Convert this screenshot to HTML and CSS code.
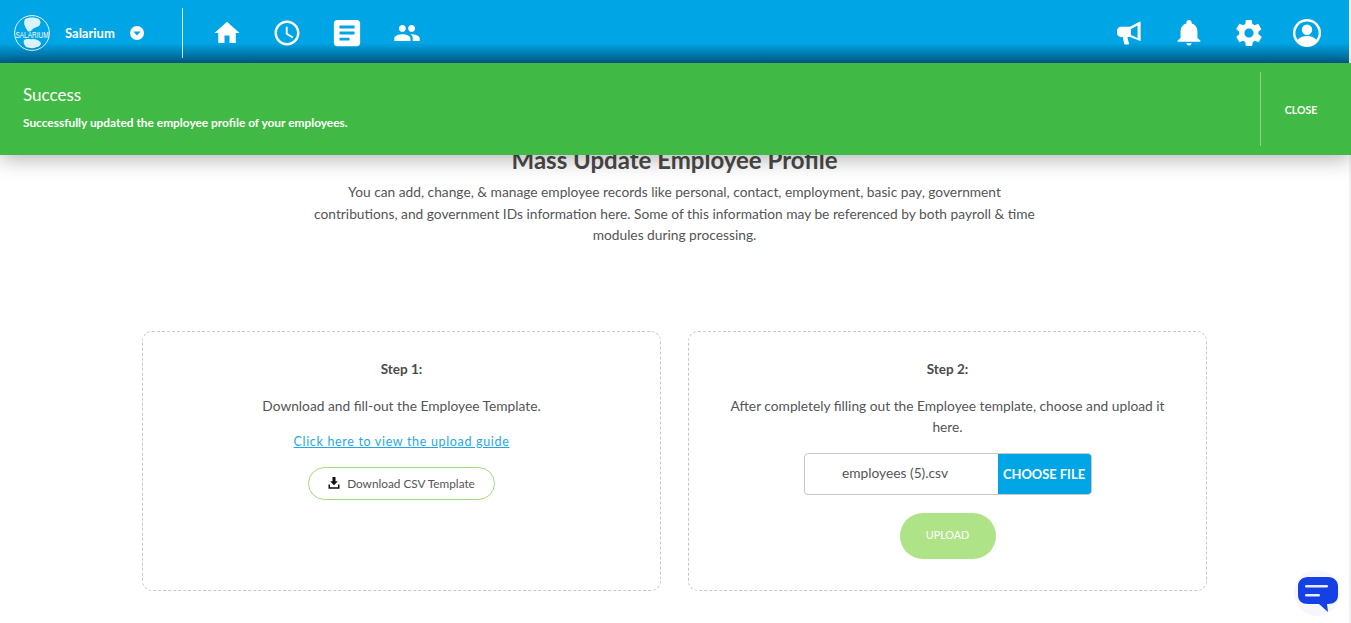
FILE: index.html
```html
<!DOCTYPE html>
<html lang="en">
<head>
    <meta charset="UTF-8">
    <title>Mass Update Employee Profile - Salarium</title>
    <link rel="stylesheet" href="styles.css">
</head>
<body>
    <header class="topbar">
        <div class="brand">
            <svg class="logo" viewBox="0 0 36 36">
                <circle cx="18" cy="18" r="17.4" fill="none" stroke="#fff" stroke-width="0.9"/>
                <path d="M11 4c4-2 10-2 14 0 2 2 2 5 0 7-3 2-5 1-7 4-2 2-4 2-5 0-2-3-4-7-2-11z" fill="#fff" opacity="0.85"/>
                <path d="M10 25c3-2 6 0 9-1 3 0 6 1 8 4 0 2-2 4-4 4-4 2-8 1-11 0-2-2-3-5-2-7z" fill="#fff" opacity="0.85"/>
                <text class="logo-text" transform="translate(18 22.500) scale(0.72 1)" text-anchor="middle">SALARIUM</text>
            </svg>
            <span class="brand-name">Salarium</span>
            <svg class="caret" viewBox="0 0 14 14">
                <circle cx="7" cy="7" r="7" fill="#fff"/>
                <path d="M3.4 5.4h7.2L7 9.600z" fill="#00a5e6"/>
            </svg>
        </div>
        <nav class="main-nav">
            <svg class="nav-icon" viewBox="0 0 24 24"><path d="M10 20v-6h4v6h5v-8h3L12 3 2 12h3v8z"/></svg>
            <svg class="nav-icon" viewBox="0 0 24 24"><path d="M11.99 2C6.47 2 2 6.48 2 12s4.47 10 9.99 10C17.52 22 22 17.52 22 12S17.52 2 11.99 2zM12 20c-4.42 0-8-3.58-8-8s3.58-8 8-8 8 3.58 8 8-3.58 8-8 8z"/><path d="M12.5 7H11v6l5.25 3.15.75-1.23-4.5-2.67z"/></svg>
            <svg class="nav-icon" viewBox="0 0 24 24"><path d="M20 1.500H4c-1.400 0-2.500 1.100-2.500 2.500v16c0 1.400 1.100 2.500 2.500 2.500h16c1.400 0 2.500-1.100 2.500-2.500V4c0-1.400-1.100-2.500-2.500-2.500zM14 18H6v-2.300h8V18zm4-4.800H6v-2.400h12v2.400zM18 8.300H6V6h12v2.300z"/></svg>
            <svg class="nav-icon" viewBox="-1 -1 26 26"><path d="M16 11c1.660 0 2.990-1.340 2.990-3S17.660 5 16 5c-1.660 0-3 1.340-3 3s1.340 3 3 3zm-8 0c1.660 0 2.990-1.340 2.990-3S9.660 5 8 5C6.340 5 5 6.340 5 8s1.340 3 3 3zm0 2c-2.330 0-7 1.170-7 3.500V19h14v-2.500c0-2.330-4.670-3.500-7-3.500zm8 0c-.29 0-.62.02-.97.05 1.160.84 1.970 1.970 1.970 3.450V19h6v-2.500c0-2.330-4.670-3.500-7-3.500z"/></svg>
        </nav>
        <div class="user-nav">
            <svg class="nav-icon-small" viewBox="0 0 26 26"><path fill-rule="evenodd" d="M23 2l1.600-.6V21l-1.600-.4-9-3.600h-2.600l1.500 6.400c.1.600-.2 1-.8 1H9c-.5 0-.8-.3-.9-.8L6.700 17H5c-2.500 0-4-1.900-4-4.200V11c0-2.300 1.500-4.200 4-4.200h9zM21.600 5.500l-6.600 3.500v5.900l6.600 3z"/></svg>
            <svg class="nav-icon-small" viewBox="0 0 24 24"><path d="M12 23.500c1.300 0 2.400-.9 2.400-2h-4.800c0 1.100 1.100 2 2.400 2zm7.800-7V10.800c0-3.700-2-6.700-5.300-7.500v-.8C14.500 1.100 13.400 0 12 0S9.500 1.100 9.500 2.500v.8c-3.300.8-5.300 3.800-5.300 7.500v5.700L1.500 19v1h21v-1z"/></svg>
            <svg class="nav-icon-small" viewBox="0 0 24 24"><path d="M20.600 13.200c.1-.4.1-.8.1-1.200s0-.8-.1-1.200l2.500-2c.2-.2.300-.5.100-.8l-2.400-4.100c-.1-.3-.4-.4-.7-.3l-3 1.200c-.6-.5-1.300-.9-2-1.200l-.5-3.100c0-.3-.3-.5-.6-.5H9.600c-.3 0-.6.2-.6.500l-.4 3.100c-.7.300-1.400.7-2 1.200l-3-1.200c-.3-.1-.6 0-.8.3L.4 8c-.2.300-.1.600.1.800l2.500 2c-.1.4-.1.800-.1 1.200s0 .8.1 1.200l-2.500 2c-.2.200-.3.500-.1.800l2.400 4.100c.2.300.5.400.8.300l3-1.200c.6.500 1.300.9 2 1.200l.4 3.100c.1.300.3.500.6.500h4.800c.3 0 .6-.2.6-.5l.5-3.100c.7-.3 1.400-.7 2-1.200l3 1.200c.3.100.6 0 .7-.3l2.400-4.100c.2-.3.1-.6-.1-.8zM12 16.200c-2.300 0-4.200-1.900-4.200-4.200S9.700 7.800 12 7.800s4.200 1.900 4.200 4.200-1.900 4.200-4.200 4.200z"/></svg>
            <svg class="avatar" viewBox="0 0 28 28"><path fill-rule="evenodd" d="M14 0a14 14 0 1 0 0 28 14 14 0 0 0 0-28zm0 2.500a11.500 11.500 0 0 1 9.300 18.300C21.500 18.300 17.900 17 14 17s-7.500 1.300-9.300 3.800A11.500 11.500 0 0 1 14 2.500zm0 3a5.200 5.200 0 1 0 0 10.400 5.200 5.200 0 0 0 0-10.400z"/></svg>
        </div>
    </header>

    <div class="alert">
        <div class="alert-body">
            <div class="alert-title">Success</div>
            <div class="alert-text">Successfully updated the employee profile of your employees.</div>
        </div>
        <div class="alert-close">CLOSE</div>
    </div>

    <main class="page">
        <h1>Mass Update Employee Profile</h1>
        <p class="intro">You can add, change, &amp; manage employee records like personal, contact, employment, basic pay, government contributions, and government IDs information here. Some of this information may be referenced by both payroll &amp; time modules during processing.</p>

        <section class="steps">
            <div class="step-card">
                <h3>Step 1:</h3>
                <p>Download and fill-out the Employee Template.</p>
                <a class="guide-link" href="#">Click here to view the upload guide</a>
                <button class="btn-outline">
                    <svg class="download-icon" viewBox="0 0 12 12"><path d="M4.500 0h3v4.200h2.300L6 8.200 2.200 4.200h2.300z"/><path d="M.5 7.500h1.500v2.700h8V7.500h1.500v4.200H.5z"/></svg>
                    Download CSV Template
                </button>
            </div>
            <div class="step-card">
                <h3>Step 2:</h3>
                <p>After completely filling out the Employee template, choose and upload it here.</p>
                <div class="file-field">
                    <span class="file-name">employees (5).csv</span>
                    <span class="file-btn">CHOOSE FILE</span>
                </div>
                <button class="btn-upload">UPLOAD</button>
            </div>
        </section>
    </main>

    <div class="chat-bubble">
        <svg viewBox="0 0 46 46">
            <path d="M14 7h20c6 0 10 4 10 9v9c0 6-4 9-10 9h-1l1 8-9-8H14c-6 0-10-3-10-9v-9c0-5 4-9 10-9z" fill="#1540e6"/>
            <rect x="11" y="15" width="23" height="2.400" rx="1.200" fill="#e8ecff"/>
            <rect x="11" y="24" width="15" height="2.400" rx="1.200" fill="#e8ecff"/>
        </svg>
    </div>
</body>
</html>
```

FILE: styles.css
```css
* {
    margin: 0;
    padding: 0;
    box-sizing: border-box;
}

body {
    font-family: "Lato", "Noto Sans", sans-serif;
    color: #555;
    background: white;
    height: 623px;
    overflow: hidden;
    border-right: 2px solid #f1f1f1;
}

/* top bar */
.topbar {
    height: 63px;
    padding-top: 3px;
    margin-right: -2px;
    background: linear-gradient(to bottom, #00a5e6 0%, #00a5e6 68%, #00608c 100%);
    display: flex;
    align-items: center;
    color: white;
}

.brand {
    width: 183px;
    height: 50px;
    padding-left: 14px;
    display: flex;
    align-items: center;
    border-right: 1px solid rgba(255, 255, 255, 0.8);
}

.logo {
    width: 36px;
    height: 36px;
    overflow: visible;
}

.logo-text {
    font-family: "Liberation Sans", sans-serif;
    font-size: 9px;
    fill: white;
}

.brand-name {
    margin-left: 15px;
    font-size: 13px;
    font-weight: 700;
}

.caret {
    width: 14px;
    height: 14px;
    margin-left: 15px;
}

.main-nav {
    display: flex;
    align-items: center;
    gap: 30px;
    margin-left: 29px;
}

.user-nav {
    margin-left: auto;
    margin-right: 30px;
    display: flex;
    align-items: center;
    gap: 34px;
}

.nav-icon {
    width: 30px;
    height: 30px;
    fill: white;
}

.nav-icon-small {
    width: 26px;
    height: 26px;
    fill: white;
}

.avatar {
    width: 28px;
    height: 28px;
    margin-left: -3px;
    fill: white;
}

/* success banner */
.alert {
    position: absolute;
    top: 63px;
    left: 0;
    width: 100%;
    height: 92px;
    background: #40ba44;
    color: white;
    display: flex;
    align-items: center;
    box-shadow: 0 4px 20px rgba(0, 0, 0, 0.3);
}

.alert-body {
    flex: 1;
    padding-left: 23px;
    padding-bottom: 5px;
}

.alert-title {
    font-size: 17px;
    margin-bottom: 10px;
}

.alert-text {
    font-size: 11.900px;
    font-weight: 700;
}

.alert-close {
    width: 81px;
    height: 74px;
    padding-top: 2px;
    margin-right: 10px;
    border-left: 1px solid rgba(255, 255, 255, 0.4);
    display: flex;
    align-items: center;
    justify-content: center;
    font-size: 10.500px;
    font-weight: 700;
}

/* page content */
.page {
    padding-top: 83px;
    text-align: center;
}

h1 {
    font-size: 24px;
    line-height: 28px;
    font-weight: 700;
    color: #4a4a4a;
}

.intro {
    width: 730px;
    margin: 7px auto 0;
    font-size: 13.750px;
    line-height: 21.500px;
}

.steps {
    display: flex;
    justify-content: center;
    gap: 27px;
    margin-top: 85px;
}

.step-card {
    width: 519px;
    height: 260px;
    padding: 27px 30px 0;
    border: 1px dashed #c8c8c8;
    border-radius: 10px;
    display: flex;
    flex-direction: column;
    align-items: center;
    font-size: 13.750px;
}

.step-card h3 {
    font-size: 13.500px;
    line-height: 20px;
    font-weight: 700;
    margin-bottom: 16px;
    color: #4a4a4a;
}

.step-card p {
    line-height: 21px;
}

.guide-link {
    margin-top: 18px;
    font-size: 12.500px;
    line-height: 16px;
    letter-spacing: 0.67px;
    color: #1fa8e8;
}

.btn-outline {
    margin-top: 17px;
    width: 187px;
    height: 33px;
    background: white;
    border: 1px solid #a3d97c;
    border-radius: 17px;
    font-family: inherit;
    font-size: 11.800px;
    color: #555;
    display: flex;
    align-items: center;
    justify-content: center;
    gap: 7px;
}

.download-icon {
    width: 12px;
    height: 12px;
    fill: #111;
}

.file-field {
    margin-top: 16px;
    width: 288px;
    height: 42px;
    border: 1px solid #c8c8c8;
    border-radius: 4px;
    overflow: hidden;
    display: flex;
    align-items: center;
}

.file-name {
    flex: 1;
    padding-right: 12px;
    padding-bottom: 2px;
    text-align: center;
    font-size: 13.750px;
}

.file-btn {
    width: 93px;
    height: 100%;
    background: #00a5e6;
    color: white;
    font-weight: 700;
    font-size: 12.900px;
    display: flex;
    align-items: center;
    justify-content: center;
}

.btn-upload {
    margin-top: 18px;
    width: 96px;
    height: 46px;
    padding-bottom: 2px;
    border: none;
    border-radius: 23px;
    background: #afe388;
    color: white;
    font-family: inherit;
    font-size: 10.800px;
}

/* chat launcher */
.chat-bubble {
    position: fixed;
    right: 11px;
    bottom: 7px;
    width: 46px;
    height: 46px;
    border-radius: 50%;
    background: #f5f7fd;
}

.chat-bubble svg {
    display: block;
    width: 46px;
    height: 46px;
}
```
